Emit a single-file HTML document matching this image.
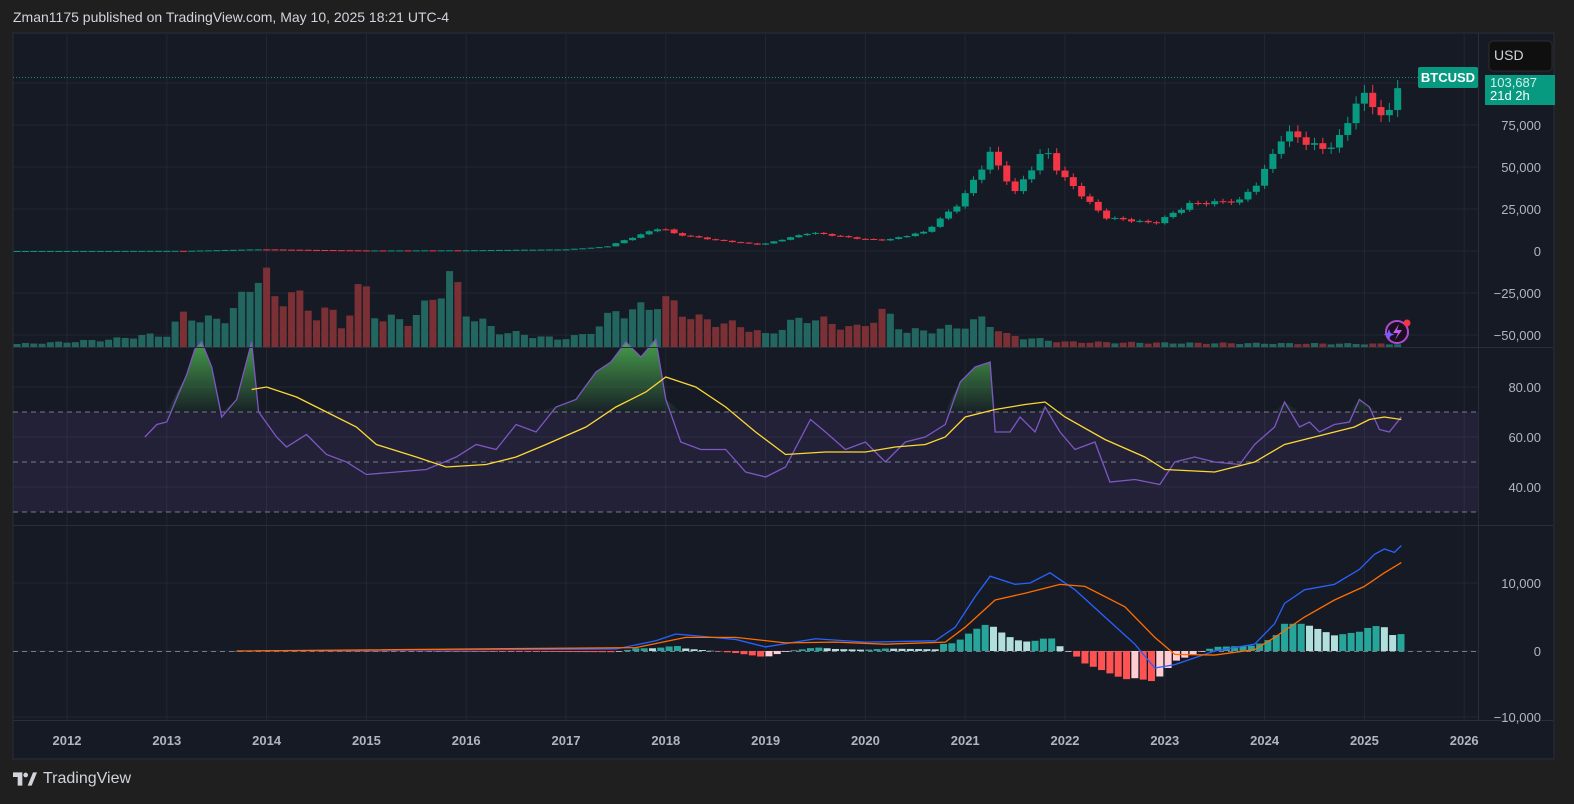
<!DOCTYPE html>
<html><head><meta charset="utf-8">
<style>
html,body{margin:0;padding:0;background:#1f1f1f;width:1574px;height:804px;overflow:hidden;font-family:"Liberation Sans",sans-serif}
#hdr{position:absolute;left:13px;top:9px;color:#d1d4dc;font-size:14px}
#ft{position:absolute;left:13px;top:770px;color:#d1d4dc;font-size:16px;display:flex;align-items:center;gap:6px}
svg text{font-family:"Liberation Sans",sans-serif}
</style></head><body>
<div id="hdr">Zman1175 published on TradingView.com, May 10, 2025 18:21 UTC-4</div>
<svg id="c" width="1574" height="804" style="position:absolute;left:0;top:0">
<defs><linearGradient id="gg" x1="0" y1="0" x2="0" y2="1"><stop offset="0" stop-color="#4caf50" stop-opacity="0.9"/><stop offset="1" stop-color="#4caf50" stop-opacity="0.05"/></linearGradient></defs>
<rect x="13" y="33" width="1541" height="726" fill="#161a25" stroke="#2a2e39" stroke-width="1"/>
<g id="grid"></g>
<rect x="13" y="412" width="1465" height="100" fill="#7e57c2" fill-opacity="0.12"/>
<g id="draw"></g>
<line x1="13" y1="347.5" x2="1553" y2="347.5" stroke="#2a2e39"/>
<line x1="13" y1="525.5" x2="1553" y2="525.5" stroke="#2a2e39"/>
<line x1="13" y1="720.5" x2="1553" y2="720.5" stroke="#2a2e39"/>
<line x1="1478.5" y1="33" x2="1478.5" y2="720" stroke="#2a2e39"/>
<g id="labels" fill="#b2b5be" font-size="13"></g>
</svg>
<div id="ft"><svg width="24" height="14" viewBox="0 0 36 20"><path d="M0 0h14v20h-7V7H0z" fill="#d1d4dc"/><path d="M22 20L30 0h6l-8 20z" fill="#d1d4dc"/><circle cx="19" cy="4" r="3.5" fill="#d1d4dc"/></svg><span>TradingView</span></div>
<script>
const NS="http://www.w3.org/2000/svg";
function el(p,t,a,txt){const e=document.createElementNS(NS,t);for(const k in a)e.setAttribute(k,a[k]);if(txt!==undefined)e.textContent=txt;p.appendChild(e);return e;}
const G=document.getElementById('grid'),D=document.getElementById('draw'),L=document.getElementById('labels');
const X=y=>67+(y-2012)*99.8;
for(let y=2012;y<=2026;y++){el(G,'line',{x1:X(y),y1:33,x2:X(y),y2:720,stroke:'#232733'});}
[83,125,167,209,251,293,335].forEach(y=>el(G,'line',{x1:13,y1:y,x2:1478,y2:y,stroke:'#232733'}));
[387,437,487].forEach(y=>el(G,'line',{x1:13,y1:y,x2:1478,y2:y,stroke:'#232733'}));
[583,651,717].forEach(y=>el(G,'line',{x1:13,y1:y,x2:1478,y2:y,stroke:'#232733'}));
[["75,000",125],["50,000",167],["25,000",209],["0",251],["−25,000",293],["−50,000",335],["80.00",387],["60.00",437],["40.00",487],["10,000",583],["0",651],["−10,000",717]].forEach(([t,y])=>el(L,'text',{x:1541,y:y+5,'text-anchor':'end'},t));
for(let y=2012;y<=2026;y++)el(L,'text',{x:X(y),y:745,'text-anchor':'middle','font-weight':'bold'},String(y));
function interp(k,t){if(t<=k[0][0])return k[0][1];for(let i=1;i<k.length;i++)if(t<=k[i][0]){const a=k[i-1],b=k[i];return a[1]+(b[1]-a[1])*(t-a[0])/(b[0]-a[0]);}return k[k.length-1][1];}
const PK=[[2011.5,3],[2013.2,100],[2013.9,1000],[2014.5,600],[2015,300],[2016,430],[2017,1000],[2017.4,2500],[2017.95,14000],[2018.1,10000],[2018.5,6500],[2018.95,3700],[2019.45,11000],[2019.95,7200],[2020.2,6400],[2020.6,11500],[2020.95,29000],[2021.25,58000],[2021.5,35000],[2021.8,61000],[2021.95,46000],[2022.4,20000],[2022.9,16500],[2023.25,28000],[2023.75,30000],[2023.95,42000],[2024.2,71000],[2024.6,60000],[2024.8,70000],[2024.95,96000],[2025.1,84000],[2025.25,82000],[2025.37,103000]];
const PY=p=>251-p*0.00168;
const VK=[[2011.5,3],[2012.0,5],[2012.5,8],[2012.7,11],[2013.0,12],[2013.2,36],[2013.35,25],[2013.6,30],[2013.8,52],[2013.9,78],[2014.0,70],[2014.1,40],[2014.25,60],[2014.45,30],[2014.6,40],[2014.75,20],[2014.95,64],[2015.1,30],[2015.4,25],[2015.6,40],[2015.75,60],[2015.85,72],[2016,35],[2016.3,16],[2016.6,12],[2016.9,8],[2017.2,12],[2017.5,35],[2017.8,38],[2017.95,48],[2018.1,40],[2018.3,28],[2018.5,25],[2018.8,20],[2019,12],[2019.4,30],[2019.6,25],[2019.9,18],[2020.2,35],[2020.4,15],[2020.8,18],[2021.0,22],[2021.2,28],[2021.4,12],[2021.7,8],[2022,5],[2023,4],[2025.4,3]];
let prev=3,i=0;
for(let t=2011.5;t<=2025.37;t+=1/12,i++){
 const c=interp(PK,t)*(1+0.03*Math.sin(i*2.1)),o=prev;prev=c;
 const up=c>=o,col=up?'#089981':'#f23645';
 const x=X(t);
 const hi=Math.max(o,c)*1.05,lo=Math.min(o,c)*0.95;
 el(D,'line',{x1:x,y1:PY(hi),x2:x,y2:PY(lo),stroke:col});
 const y1=PY(Math.max(o,c)),y2=PY(Math.min(o,c));
 el(D,'rect',{x:x-3.5,y:y1,width:7,height:Math.max(1,y2-y1),fill:col});
 const vh=interp(VK,t)*(1+0.2*Math.sin(i*1.7));
 el(D,'rect',{x:x-3.5,y:347-vh,width:7,height:vh,fill:up?'#22665f':'#7a3034'});
}
el(D,'line',{x1:13,y1:77.5,x2:1478,y2:77.5,stroke:'#089981','stroke-dasharray':'1 2'});
[412,462,512].forEach(y=>el(D,'line',{x1:13,y1:y,x2:1478,y2:y,stroke:'#787b86','stroke-dasharray':'5 4'}));
const RK=[[2012.78,60],[2012.9,65],[2013.0,66],[2013.2,85],[2013.28,95],[2013.35,98],[2013.45,88],[2013.55,68],[2013.7,75],[2013.85,98],[2013.92,70],[2014.1,60],[2014.2,56],[2014.4,61],[2014.6,53],[2014.8,50],[2015,45],[2015.3,46],[2015.6,47],[2015.9,52],[2016.1,57],[2016.3,55],[2016.5,65],[2016.7,62],[2016.9,72],[2017.1,75],[2017.3,86],[2017.45,90],[2017.6,98],[2017.75,92],[2017.9,99],[2018,75],[2018.15,58],[2018.35,55],[2018.6,55],[2018.8,46],[2019,44],[2019.2,48],[2019.45,67],[2019.6,62],[2019.8,55],[2020,58],[2020.2,50],[2020.4,58],[2020.6,60],[2020.8,65],[2020.95,82],[2021.1,88],[2021.25,90],[2021.3,62],[2021.45,62],[2021.55,68],[2021.7,62],[2021.8,72],[2021.95,62],[2022.1,55],[2022.3,58],[2022.45,42],[2022.7,43],[2022.95,41],[2023.1,50],[2023.3,52],[2023.5,50],[2023.75,49],[2023.9,57],[2024.1,64],[2024.2,74],[2024.35,64],[2024.45,66],[2024.55,62],[2024.7,65],[2024.85,66],[2024.95,75],[2025.05,72],[2025.15,63],[2025.25,62],[2025.37,68]];
const RY=v=>587-v*2.5;
let pts=RK.map(p=>X(p[0])+','+RY(p[1])).join(' ');
let fp=RK.map(p=>X(p[0])+','+RY(Math.max(70,p[1]))).join(' ');
el(D,'polygon',{points:X(RK[0][0])+','+RY(70)+' '+fp+' '+X(2025.37)+','+RY(70),fill:'url(#gg)'});
el(D,'polyline',{points:pts,fill:'none',stroke:'#7e57c2','stroke-width':1.3});
const MAK=[[2013.85,79],[2014.0,80],[2014.3,76],[2014.6,70],[2014.9,64],[2015.1,57],[2015.5,52],[2015.8,48],[2016.2,49],[2016.5,52],[2016.8,57],[2017.2,64],[2017.5,72],[2017.8,78],[2018,84],[2018.3,80],[2018.6,72],[2018.9,62],[2019.2,53],[2019.6,54],[2020,54],[2020.3,56],[2020.6,57],[2020.8,60],[2021.0,68],[2021.3,71],[2021.6,73],[2021.8,74],[2022,68],[2022.4,59],[2022.8,52],[2023,47],[2023.5,46],[2023.9,50],[2024.2,57],[2024.6,61],[2024.9,64],[2025.05,67],[2025.2,68],[2025.37,67]];
el(D,'polyline',{points:MAK.map(p=>X(p[0])+','+RY(p[1])).join(' '),fill:'none',stroke:'#fdd835','stroke-width':1.3});
const MY=v=>651-v*0.0068;
el(D,'line',{x1:13,y1:651.5,x2:1478,y2:651.5,stroke:'#787b86','stroke-dasharray':'5 4'});
const MK=[[2013.7,0],[2017.5,300],[2017.9,1500],[2018.1,2500],[2018.7,1700],[2019.0,600],[2019.5,1800],[2020,1300],[2020.7,1500],[2020.9,3500],[2021.1,8000],[2021.25,11000],[2021.5,9800],[2021.65,10000],[2021.85,11500],[2022.1,9000],[2022.4,5000],[2022.7,1000],[2022.9,-2500],[2023.1,-2000],[2023.5,0],[2023.9,1000],[2024.1,4000],[2024.2,7000],[2024.4,9000],[2024.7,9800],[2024.95,12000],[2025.1,14200],[2025.2,15000],[2025.3,14500],[2025.37,15500]];
const SK=[[2013.7,0],[2017.7,500],[2018.2,2000],[2018.7,2000],[2019.2,1200],[2019.7,1300],[2020.2,1000],[2020.8,1300],[2021.0,3500],[2021.3,7500],[2021.6,8500],[2021.95,9800],[2022.2,9500],[2022.6,6500],[2022.9,2000],[2023.1,-500],[2023.5,-600],[2023.9,200],[2024.1,2000],[2024.4,5000],[2024.7,7500],[2025.0,9500],[2025.2,11500],[2025.37,13000]];
for(let t=2013.7;t<=2025.37;t+=1/12){
 const h=interp(MK,t)-interp(SK,t);
 const pos=h>=0,rising=Math.abs(h)>=Math.abs(interp(MK,t-1/12)-interp(SK,t-1/12));
 const col=pos?(rising?'#26a69a':'#b2dfdb'):(rising?'#ff5252':'#ffcdd2');
 const y=MY(Math.max(h,0)),hh=Math.abs(h)*0.0068;
 el(D,'rect',{x:X(t)-3.5,y:pos?y:651,width:7,height:Math.max(0.5,hh),fill:col});
}
el(D,'polyline',{points:MK.map(p=>X(p[0])+','+MY(p[1])).join(' '),fill:'none',stroke:'#2962ff','stroke-width':1.3});
el(D,'polyline',{points:SK.map(p=>X(p[0])+','+MY(p[1])).join(' '),fill:'none',stroke:'#ff6d00','stroke-width':1.3});
el(D,'rect',{x:1418,y:67,width:60,height:21,rx:2,fill:'#089981'});
el(D,'text',{x:1448,y:82,'text-anchor':'middle',fill:'#fff','font-size':13,'font-weight':'bold'},'BTCUSD');
el(D,'rect',{x:1485,y:75,width:70,height:30,fill:'#089981'});
el(D,'text',{x:1490,y:87,fill:'#d1f0ea','font-size':13},'103,687');
el(D,'text',{x:1490,y:100,fill:'#fff','font-size':13},'21d 2h');
el(D,'rect',{x:1489,y:41,width:63,height:30,rx:4,fill:'#0f0f0f',stroke:'#2e2e2e'});
el(D,'text',{x:1494,y:60,fill:'#d1d4dc','font-size':14},'USD');
el(D,'circle',{cx:1397,cy:332,r:11,fill:'#1a1020',stroke:'#b04bd0','stroke-width':2});
el(D,'path',{d:'M1399 324l-6 9h5l-3 7 7-10h-5z',fill:'#c060e0'});
el(D,'circle',{cx:1407,cy:323,r:3.5,fill:'#f23645'});
el(D,'path',{d:'M1389 329l1.5 4 4 1.5-4 1.5-1.5 4-1.5-4-4-1.5 4-1.5z',fill:'#7c5cff'});
</script>
</body></html>
